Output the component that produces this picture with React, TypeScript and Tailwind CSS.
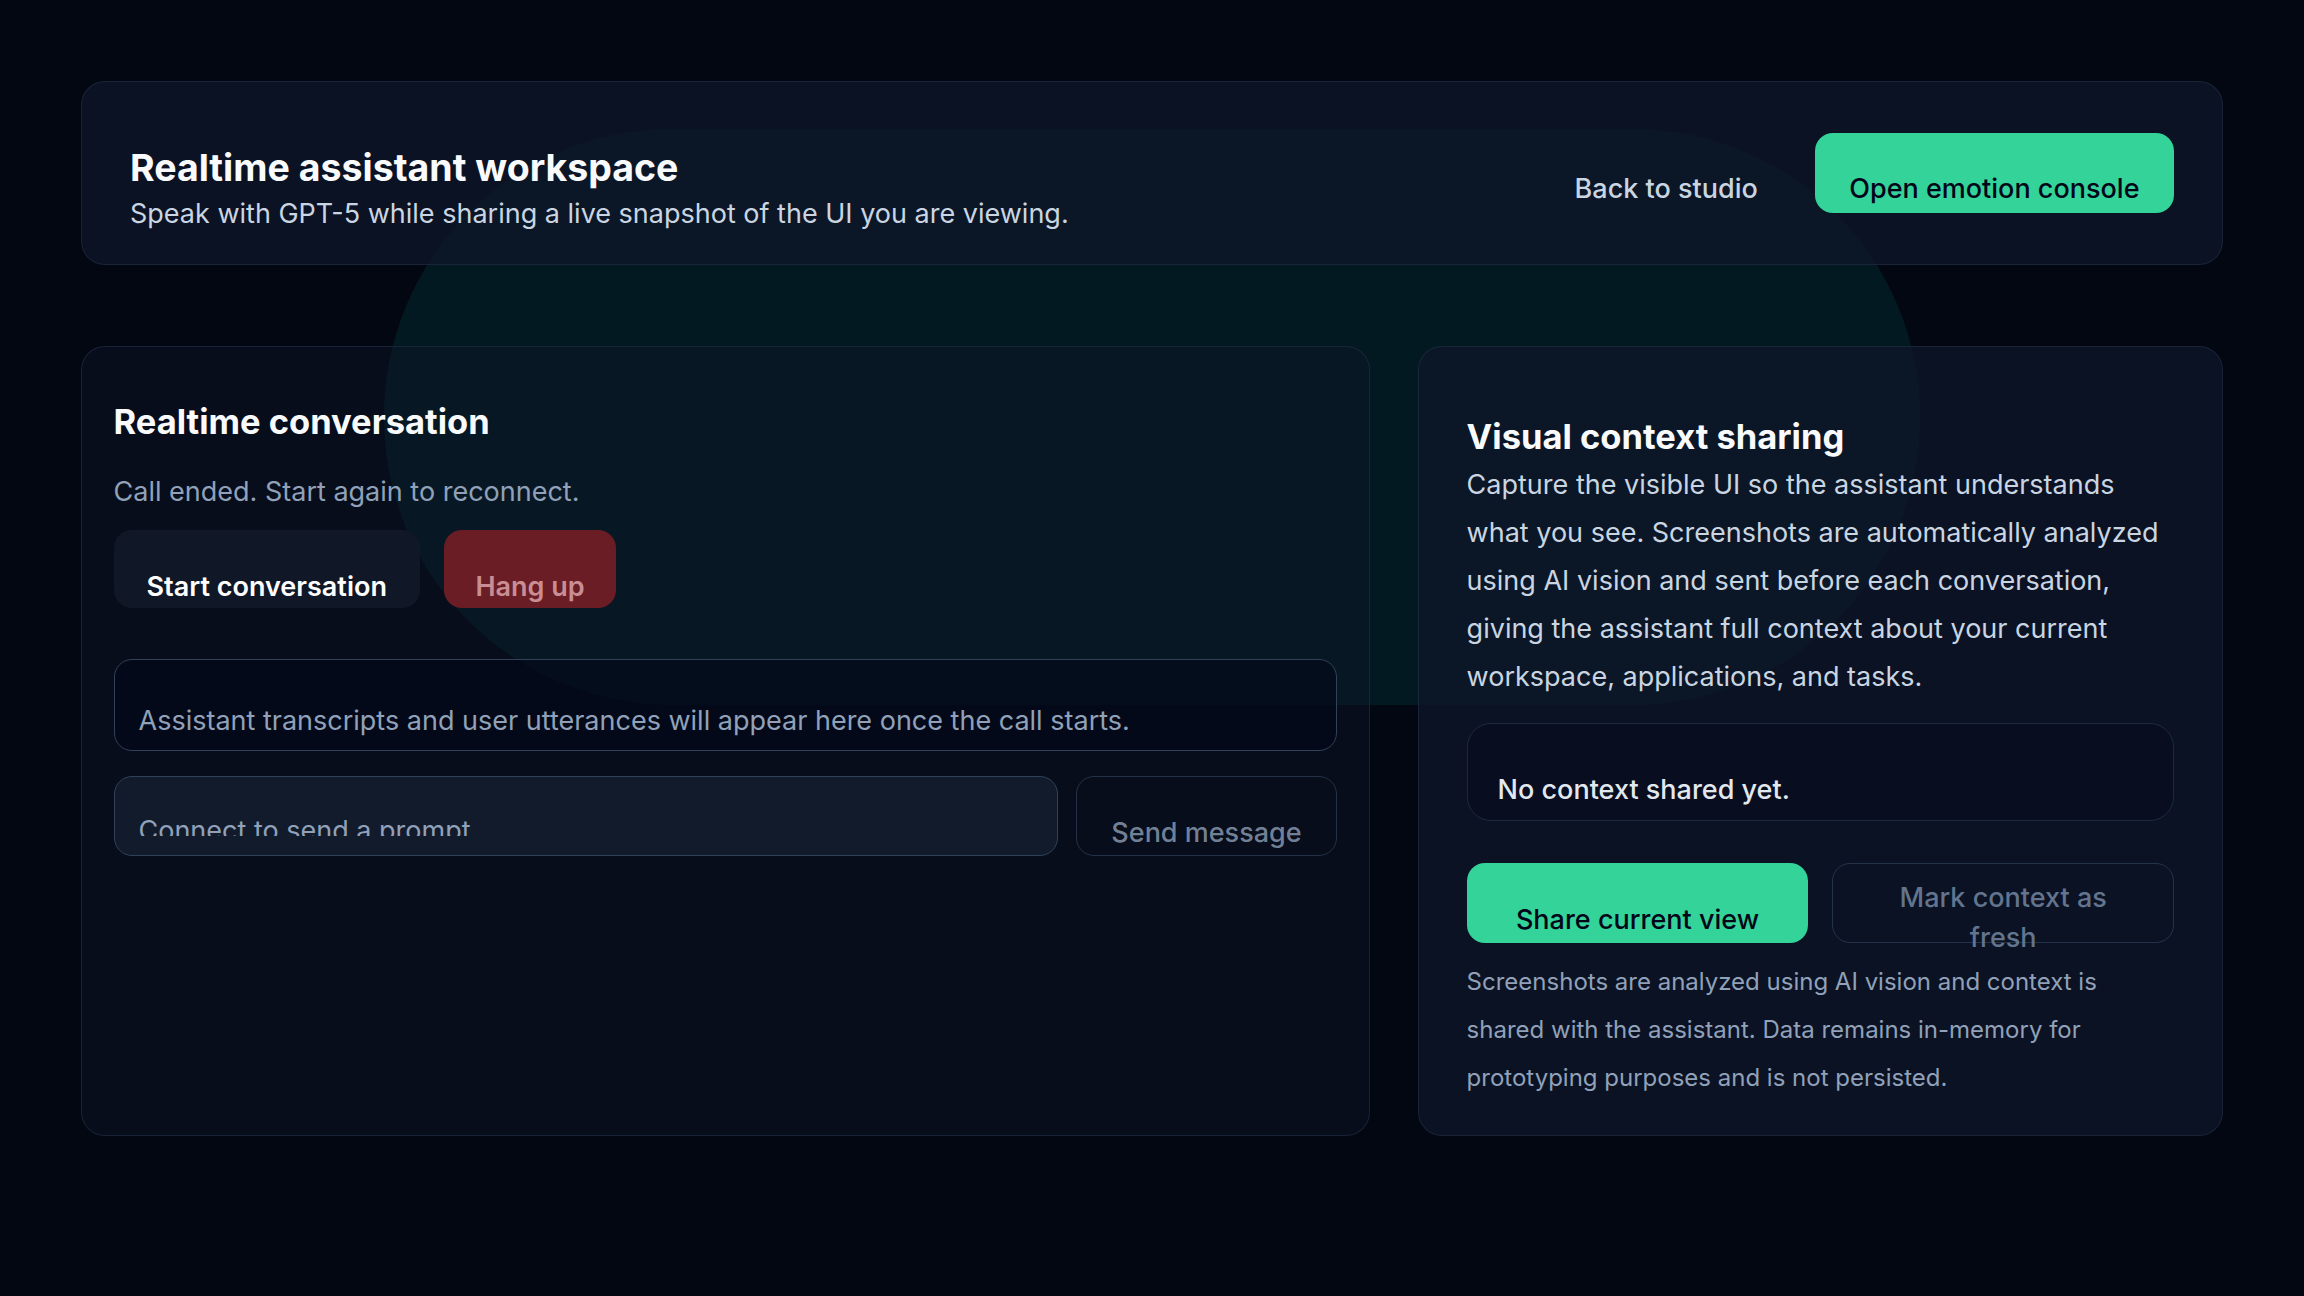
import React from "react";

const App: React.FC = () => {
  return (
    <div className="relative min-h-[864px] overflow-hidden bg-[#030712] px-[54px] pt-[54px] pb-16 font-[Inter,'Liberation_Sans',sans-serif] text-slate-100 [zoom:1.5]">
      {/* soft backdrop glow */}
      <div className="pointer-events-none absolute left-1/2 top-[86px] h-[384px] w-[1024px] -translate-x-1/2 rounded-full bg-teal-500/10" />

      <header className="relative flex items-center justify-between rounded-2xl border border-slate-800/80 bg-slate-900/70 px-8 py-[31px]">
        <div className="translate-y-2.5">
          <h1 className="text-[25px] leading-8 font-bold text-slate-50">Realtime assistant workspace</h1>
          <p className="mt-[3px] text-lg leading-6 text-slate-300">
            Speak with GPT-5 while sharing a live snapshot of the UI you are viewing.
          </p>
        </div>
        <div className="flex items-center gap-6">
          <a href="#" className="h-[53px] px-3.5 pt-[25px] text-lg leading-6 font-medium text-slate-300">
            Back to studio
          </a>
          <button className="h-[53px] rounded-xl bg-[#34d399] px-[23px] pt-[22px] text-lg leading-6 font-medium text-slate-950">
            Open emotion console
          </button>
        </div>
      </header>

      <main className="relative mt-[54px] grid grid-cols-[1.6fr_1fr] gap-8">
        {/* conversation panel */}
        <section className="flex flex-col rounded-2xl border border-slate-800/80 bg-slate-900/40 p-[21px]">
          <h2 className="pt-[13px] text-[23px] leading-8 font-bold text-slate-50">Realtime conversation</h2>
          <p className="mt-[19px] text-lg leading-6 text-slate-400">Call ended. Start again to reconnect.</p>

          <div className="mt-[13px] flex gap-4">
            <button className="h-[52px] rounded-xl bg-gray-900 px-[22px] pt-6 text-lg leading-6 font-semibold text-white">
              Start conversation
            </button>
            <button className="h-[52px] rounded-xl bg-[#6a1d25] px-[21px] pt-6 text-lg leading-6 font-semibold text-[#c98e94]">
              Hang up
            </button>
          </div>

          <div className="mt-[34px] rounded-xl border border-slate-700 bg-slate-950/60 px-4 pt-[29px] pb-[7px] text-lg leading-6 text-slate-400">
            Assistant transcripts and user utterances will appear here once the call starts.
          </div>

          <div className="mt-[17px] flex gap-3">
            <div className="h-[53px] flex-1 rounded-xl border border-slate-700 bg-slate-800/50 px-4 pt-6">
              <div className="h-[15px] overflow-hidden text-lg leading-6 text-slate-400">Connect to send a prompt</div>
            </div>
            <button className="h-[53px] rounded-xl border border-slate-700/70 px-[23px] pt-[23px] text-lg leading-6 font-medium text-slate-400/80">
              Send message
            </button>
          </div>
        </section>

        {/* visual context panel */}
        <section className="rounded-2xl border border-slate-800/80 bg-slate-900/70 p-8 pb-[22px]">
          <h2 className="pt-3 text-[23px] leading-8 font-bold text-slate-50">Visual context sharing</h2>
          <p className="text-lg leading-8 text-slate-300">
            Capture the visible UI so the assistant understands what you see. Screenshots are
            automatically analyzed using AI vision and sent before each conversation, giving the
            assistant full context about your current workspace, applications, and tasks.
          </p>

          <div className="mt-[15px] rounded-2xl border border-slate-800 bg-slate-950/30 px-5 pt-8 pb-2 text-lg leading-6 font-medium text-slate-200">
            No context shared yet.
          </div>

          <div className="mt-7 grid grid-cols-2 gap-4">
            <button className="h-[53px] rounded-xl bg-[#34d399] px-6 pt-[23px] text-lg leading-6 font-medium text-slate-950">
              Share current view
            </button>
            <button className="h-[53px] rounded-xl border border-slate-700/70 px-6 pt-[9px] text-lg leading-[27px] font-medium text-slate-500">
              Mark context as fresh
            </button>
          </div>

          <p className="mt-2.5 text-base leading-8 text-slate-400">
            Screenshots are analyzed using AI vision and context is shared with the assistant. Data
            remains in-memory for prototyping purposes and is not persisted.
          </p>
        </section>
      </main>
    </div>
  );
};

export default App;
